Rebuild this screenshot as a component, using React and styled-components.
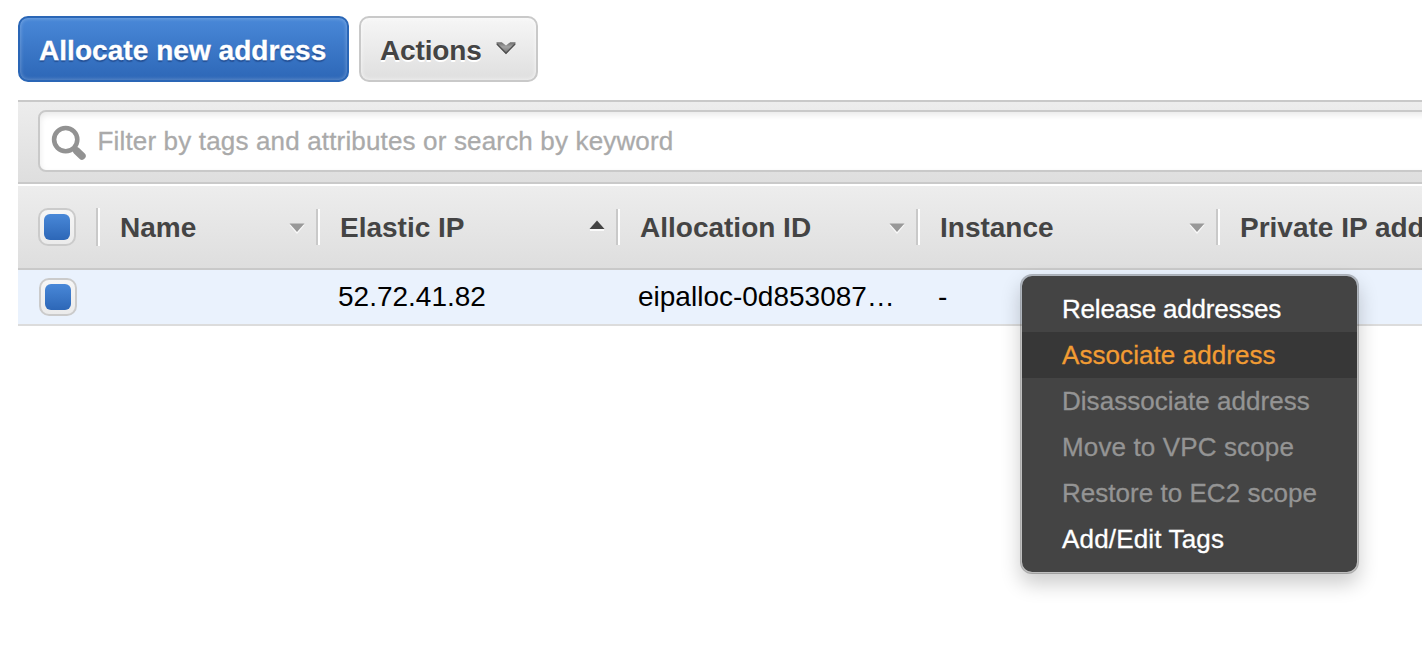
import React from "react";
import styled, { createGlobalStyle, css } from "styled-components";

const GlobalStyle = createGlobalStyle`
  * { box-sizing: border-box; }
  html, body { margin: 0; padding: 0; background: #fff; overflow: hidden; }
  body { font-family: "Liberation Sans", Arial, Helvetica, sans-serif; }
`;

const Page = styled.main`
  position: relative;
  width: 1422px;
  height: 672px;
  padding: 16px 0 0 18px;
  overflow: hidden;
  background: #fff;
`;

const Toolbar = styled.div`
  display: flex;
  gap: 10px;
  height: 84px;
`;

const Button = styled.button`
  display: flex;
  align-items: center;
  height: 66px;
  padding: 4px 0 0 19px;
  width: ${(p) => p.$width}px;
  border: 2px solid #c9c9c9;
  border-radius: 10px;
  font: bold 28px/32px "Liberation Sans", Arial, sans-serif;
  letter-spacing: -0.15px;
  white-space: nowrap;
  color: #444;
  text-shadow: 0 2px 0 #fff;
  background: linear-gradient(#f6f6f6, #dfdfdf);
  box-shadow: inset 0 0 4px rgba(255, 255, 255, 0.8);
  ${(p) =>
    p.$primary &&
    css`
      color: #fff;
      letter-spacing: 0.05px;
      border-color: #2a66b6;
      -webkit-text-stroke: 0.3px #fff;
      text-shadow: 0 2px 1px rgba(20, 50, 110, 0.5);
      background: linear-gradient(#4988d8, #2d67b7);
      box-shadow: inset 0 0 4px rgba(255, 255, 255, 0.35);
    `}
`;

const ButtonChevron = styled.svg`
  display: block;
  margin: -6px 0 0 13px;
`;

const FilterBar = styled.div`
  height: 84px;
  padding: 8px 0 0 20px;
  border-top: 2px solid #c9c9c9;
  border-bottom: 2px solid #c9c9c9;
  background: linear-gradient(#ededed, #dedede);
`;

const SearchField = styled.div`
  display: flex;
  align-items: center;
  height: 62px;
  margin-right: -20px;
  padding-left: 11px;
  border: 2px solid #c9c9c9;
  border-radius: 8px;
  background: #fff;
  box-shadow: inset 0 3px 6px rgba(0, 0, 0, 0.09);
`;

const Placeholder = styled.span`
  margin-left: 10.5px;
  font-size: 26px;
  line-height: 30px;
  letter-spacing: 0.16px;
  color: #aaa;
  -webkit-text-stroke: 0.3px #aaa;
`;

const HeaderRow = styled.div`
  display: flex;
  align-items: center;
  height: 84px;
  margin-top: 2px;
  border-bottom: 2px solid #c9c9c9;
  background: linear-gradient(#ededed, #dedede);
`;

const HeaderCell = styled.div`
  display: flex;
  flex: none;
  align-items: center;
  justify-content: space-between;
  width: ${(p) => p.$width}px;
  height: 36px;
  padding: 0 13px 0 20px;
  border-right: 2px solid #fff;
  box-shadow: inset -2px 0 0 #c9c9c9;
  white-space: nowrap;
  color: #444;
`;

const HeaderLabel = styled.span`
  padding-top: 2px;
  font-size: 28px;
  font-weight: bold;
  line-height: 36px;
`;

const Row = styled.div`
  display: flex;
  align-items: center;
  height: 56px;
  border-bottom: 2px solid #dcdcdc;
  background: #eaf2fd;
`;

const Cell = styled.div`
  flex: none;
  width: ${(p) => p.$width}px;
  font-size: 28px;
  line-height: 32px;
  padding-left: 18px;
  white-space: nowrap;
  color: #000;
`;

const Checkbox = styled.span`
  display: block;
  flex: none;
  width: 38px;
  height: 38px;
  padding: 4px;
  border: 2px solid #cbcbcb;
  border-radius: 10px;
  background: linear-gradient(#f6f6f6, #ebebeb);

  &::before {
    content: "";
    display: block;
    width: 26px;
    height: 26px;
    border-radius: 6px;
    background: linear-gradient(#4988d8, #2d67b7);
  }
`;

const Menu = styled.ul`
  position: absolute;
  top: 274px;
  left: 1020px;
  width: 339px;
  margin: 0;
  padding: 10px 0;
  list-style: none;
  border: 2px solid rgba(0, 0, 0, 0.25);
  border-radius: 12px;
  background: #444;
  background-clip: padding-box;
  box-shadow: 0 10px 20px rgba(0, 0, 0, 0.2);
`;

const itemColors = { normal: "#fff", active: "#f29c33", disabled: "#949494" };

const MenuItem = styled.li`
  height: 46px;
  padding-left: 40px;
  font-size: 26px;
  line-height: 46px;
  letter-spacing: ${(p) => p.$tracking}px;
  white-space: nowrap;
  color: ${(p) => itemColors[p.$state]};
  -webkit-text-stroke: 0.3px ${(p) => itemColors[p.$state]};
  background: ${(p) => (p.$state === "active" ? "#373737" : "transparent")};
`;

const MagnifierIcon = styled.svg`
  display: block;
  margin-top: 3px;
`;

const SearchIcon = () => (
  <MagnifierIcon width="36" height="36" viewBox="0 0 36 36" fill="none" stroke="#929292">
    <circle cx="14.7" cy="14.6" r="11.6" strokeWidth="4.6" />
    <path d="M22.5 22.5 L25.5 25.5" strokeWidth="5.5" />
    <path d="M25.5 25.8 L31 31" strokeWidth="7.4" strokeLinecap="round" />
  </MagnifierIcon>
);

const SortMark = ({ ascending }) =>
  ascending ? (
    <svg width="16" height="22" viewBox="0 0 16 22">
      <path d="M1 13h14v2h-14z" fill="#fff" opacity=".8" />
      <path d="M8 4.5 L15.5 13 H0.5 Z" fill="#444" />
    </svg>
  ) : (
    <svg width="16" height="22" viewBox="0 0 16 22">
      <path d="M0.5 9 L8 18 L15.5 9 Z" fill="#fff" opacity=".8" />
      <path d="M0.5 7.5 H15.5 L8 16 Z" fill="#999" />
    </svg>
  );

const columns = [
  { label: "Name", width: 220, value: "" },
  { label: "Elastic IP", width: 300, value: "52.72.41.82", ascending: true },
  { label: "Allocation ID", width: 300, value: "eipalloc-0d853087…" },
  { label: "Instance", width: 300, value: "-" },
  { label: "Private IP address", width: 300, value: "" },
];

const menuItems = [
  { label: "Release addresses", state: "normal", tracking: -0.2 },
  { label: "Associate address", state: "active", tracking: 0.07 },
  { label: "Disassociate address", state: "disabled", tracking: 0.03 },
  { label: "Move to VPC scope", state: "disabled", tracking: 0.13 },
  { label: "Restore to EC2 scope", state: "disabled", tracking: 0.03 },
  { label: "Add/Edit Tags", state: "normal", tracking: 0.17 },
];

const SelectHeader = styled(HeaderCell)`
  height: 38px;
`;

const SelectCell = styled.div`
  flex: none;
  width: 82px;
  padding-left: 21px;
`;

export default function App() {
  return (
    <>
      <GlobalStyle />
      <Page>
        <Toolbar>
          <Button $primary $width={331}>Allocate new address</Button>
          <Button $width={179}>
            Actions
            <ButtonChevron width="22" height="14" viewBox="0 0 22 14">
              <defs>
                <linearGradient id="chevron" x1="0" y1="0" x2="0" y2="1">
                  <stop offset="0" stopColor="#6c6c6c" />
                  <stop offset="0.4" stopColor="#a2a2a2" />
                  <stop offset="1" stopColor="#6a6a6a" />
                </linearGradient>
              </defs>
              <path
                d="M1.5 1.2 H6.8 L11 4.4 L15.2 1.2 H20.5 V3.6 L11 13 L1.5 3.6 Z"
                fill="url(#chevron)"
              />
              <path d="M2 3 L11 12.2 L20 3" fill="none" stroke="#505050" strokeWidth="1.3" />
            </ButtonChevron>
          </Button>
        </Toolbar>
        <FilterBar>
          <SearchField>
            <SearchIcon />
            <Placeholder>Filter by tags and attributes or search by keyword</Placeholder>
          </SearchField>
        </FilterBar>
        <HeaderRow>
          <SelectHeader $width={82}>
            <Checkbox />
          </SelectHeader>
          {columns.map((c) => (
            <HeaderCell key={c.label} $width={c.width}>
              <HeaderLabel>{c.label}</HeaderLabel>
              <SortMark ascending={c.ascending} />
            </HeaderCell>
          ))}
        </HeaderRow>
        <Row>
          <SelectCell>
            <Checkbox />
          </SelectCell>
          {columns.map((c) => (
            <Cell key={c.label} $width={c.width}>
              {c.value}
            </Cell>
          ))}
        </Row>
        <Menu>
          {menuItems.map((item) => (
            <MenuItem key={item.label} $state={item.state} $tracking={item.tracking}>
              {item.label}
            </MenuItem>
          ))}
        </Menu>
      </Page>
    </>
  );
}
